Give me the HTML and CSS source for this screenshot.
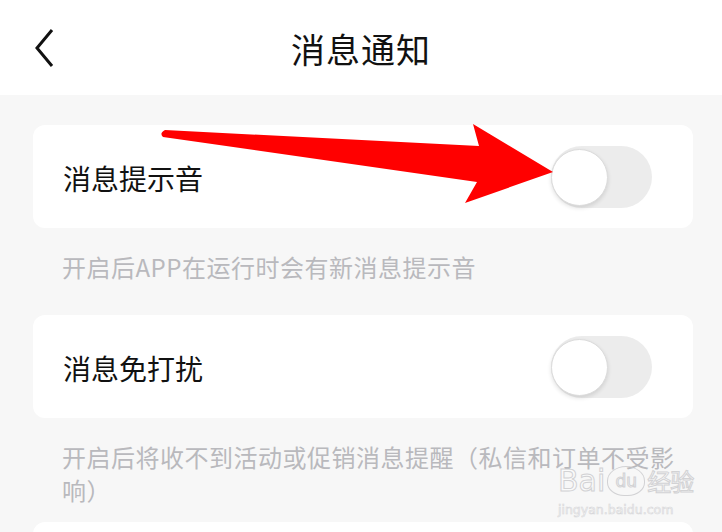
FILE: index.html
```html
<!DOCTYPE html>
<html lang="zh-CN">
<head>
<meta charset="utf-8">
<link rel="stylesheet" href="styles.css">
</head>
<body>
<div class="page">
  <header class="header">
    <svg class="back" width="24" height="40" viewBox="0 0 24 40"><polyline points="19,3 4,21 19,39" fill="none" stroke="#111" stroke-width="3"/></svg>
    <h1 class="title">消息通知</h1>
  </header>
  <main class="main">
    <section class="card">
      <span class="label">消息提示音</span>
      <span class="toggle"><span class="knob"></span></span>
    </section>
    <p class="hint hint-first">开启后APP在运行时会有新消息提示音</p>
    <section class="card">
      <span class="label">消息免打扰</span>
      <span class="toggle"><span class="knob"></span></span>
    </section>
    <p class="hint hint-second">开启后将收不到活动或促销消息提醒（私信和订单不受影响）</p>
    <section class="card card-partial"></section>
  </main>
  <svg class="arrow" width="722" height="532" viewBox="0 0 722 532">
    <path d="M165 130 L479 146 L473 124 L553 172 L465 203 L477 182 L163 137 Q159 133 165 130 Z" fill="#ff0000"/>
  </svg>
  <div class="watermark">
    <div class="wm-row"><span class="wm-bai">Bai</span><span class="wm-paw"><span class="wm-du">du</span></span><span class="wm-jy">经验</span></div>
    <div class="wm-url">jingyan.baidu.com</div>
  </div>
</div>
</body>
</html>
```
FILE: styles.css
```css
* { box-sizing: border-box; }
html, body { margin: 0; padding: 0; }
body {
  width: 722px;
  height: 532px;
  overflow: hidden;
  font-family: "Noto Sans CJK SC", "Noto Sans", sans-serif;
  background: #f7f7f7;
}
.page { position: relative; width: 722px; height: 532px; overflow: hidden; }
.header {
  height: 95px;
  background: #fff;
  display: flex;
  align-items: center;
  justify-content: center;
  position: relative;
}
.back { position: absolute; left: 33px; top: 27px; }
.title {
  margin: 0;
  font-size: 34px;
  font-weight: 400;
  color: #111;
  letter-spacing: 1px;
  line-height: 1;
  margin-top: 2px;
}
.main {
  padding: 30px 29px 0 33px;
}
.card {
  background: #fff;
  border-radius: 12px;
  height: 103px;
  display: flex;
  align-items: center;
  justify-content: space-between;
  padding: 0 41px 0 30px;
}
.card-partial { height: 60px; }
.label {
  font-size: 28px;
  color: #111;
  line-height: 1;
  margin-top: 2px;
}
.toggle {
  width: 101px;
  height: 62px;
  border-radius: 31px;
  background: #ececec;
  position: relative;
  display: block;
}
.knob {
  position: absolute;
  left: 0;
  top: 3px;
  width: 57px;
  height: 57px;
  border-radius: 50%;
  background: #fff;
  border: 1px solid #dcdcdc;
  box-shadow: 0 2px 4px rgba(0,0,0,0.12);
}
.hint {
  margin: 0;
  padding: 22px 0 0 29px;
  font-size: 24px;
  letter-spacing: 0.5px;
  line-height: 33px;
  color: #b9b9bd;
}
.hint-first { padding-bottom: 32px; }
.hint-second { padding-bottom: 16px; }
.arrow { position: absolute; left: 0; top: 0; pointer-events: none; }
.watermark {
  position: absolute;
  left: 558px;
  top: 464px;
  opacity: 0.8;
  font-family: "DejaVu Sans", sans-serif;
}
.wm-row { display: flex; align-items: center; }
.wm-bai, .wm-jy {
  font-size: 30px;
  line-height: 34px;
  color: rgba(255,255,255,0.5);
  -webkit-text-stroke: 1px #c9c9cc;
}
.wm-jy { font-family: "Noto Sans CJK SC", sans-serif; font-size: 24px; letter-spacing: -1px; }
.wm-paw {
  width: 38px;
  height: 30px;
  border: 1.5px solid #c9c9cc;
  border-radius: 50% 50% 45% 45%;
  display: flex;
  align-items: center;
  justify-content: center;
  margin: 0 2px;
}
.wm-du {
  font-size: 17px;
  color: rgba(255,255,255,0.5);
  -webkit-text-stroke: 1px #c9c9cc;
}
.wm-url {
  font-size: 12.5px;
  margin-top: 4px;
  color: rgba(255,255,255,0.5);
  -webkit-text-stroke: 0.6px #cfcfd2;
}
```
